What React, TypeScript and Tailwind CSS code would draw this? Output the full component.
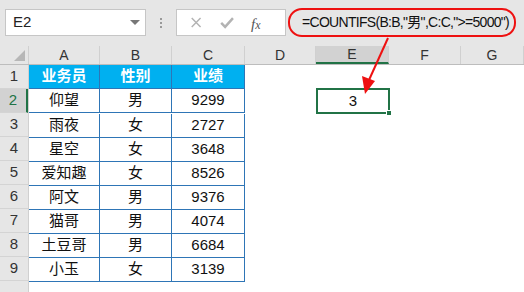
import React from "react";

const cols = ["A", "B", "C", "D", "E", "F", "G"];
const colWidths = [71, 72, 73, 71, 73, 72, 63];

const rows = [
  ["仰望", "男", "9299"],
  ["雨夜", "女", "2727"],
  ["星空", "女", "3648"],
  ["爱知趣", "女", "8526"],
  ["阿文", "男", "9376"],
  ["猫哥", "男", "4074"],
  ["土豆哥", "男", "6684"],
  ["小玉", "女", "3139"],
];

const font = { fontFamily: '"Liberation Sans", "Noto Sans CJK SC", sans-serif' };

function Cell({ text, w, head }: { text: string; w: number; head?: boolean }) {
  return (
    <div
      className={`h-[24px] flex items-center justify-center border-r border-b border-[#2e75b6] text-[15px] ${
        head ? "bg-[#00b0f0] text-white font-bold" : "bg-white text-[#111]"
      }`}
      style={{ width: w }}
    >
      {text}
    </div>
  );
}

export default function App() {
  return (
    <div className="relative w-[524px] h-[292px] overflow-hidden bg-white" style={font}>
      {/* formula bar */}
      <div className="h-[46px] bg-[#e6e6e6] flex items-start pt-[9px] pl-[5px]">
        <div className="w-[141px] h-[27px] bg-white border border-[#c6c6c6] flex items-center pl-[7px] pr-[5px] justify-between">
          <span className="text-[15px] text-[#222]">E2</span>
          <span className="w-0 h-0 border-l-[5px] border-r-[5px] border-t-[5px] border-l-transparent border-r-transparent border-t-[#777]" />
        </div>
        <div className="w-[30px] h-[27px] flex flex-col items-center justify-center gap-[2px]">
          <span className="w-[2px] h-[2px] bg-[#999]" />
          <span className="w-[2px] h-[2px] bg-[#999]" />
          <span className="w-[2px] h-[2px] bg-[#999]" />
        </div>
        <div className="w-[110px] h-[27px] bg-white border border-[#c6c6c6] flex items-center">
          <svg width="110" height="25" viewBox="0 0 110 25">
            <path d="M15 8 L24 17 M24 8 L15 17" stroke="#b3b3b3" strokeWidth="1.5" />
            <path d="M45 13 L49 17 L57 8" stroke="#b3b3b3" strokeWidth="2.5" fill="none" />
          </svg>
          <span
            className="absolute left-[251px] top-[13px] text-[15px] italic text-[#555]"
            style={{ fontFamily: '"Liberation Serif", serif' }}
          >
            f<span className="text-[12px]">x</span>
          </span>
        </div>
        <div className="flex-1 h-[29px] -mt-[1px] ml-[2px] flex items-center">
          <div className="h-[29px] w-[228px] border-2 border-[#ee1111] rounded-[14px] flex items-center pl-[12px] text-[14px] tracking-[-0.7px] text-[#111] whitespace-nowrap">
            =COUNTIFS(B:B,"男",C:C,"&gt;=5000")
          </div>
        </div>
      </div>

      {/* column headers */}
      <div className="flex h-[19px] bg-[#e6e6e6] border-b border-[#bdbdbd]">
        <div className="w-[29px] h-full border-r border-[#d0d0d0] relative">
          <span
            className="absolute right-[3px] bottom-[3px] w-0 h-0"
            style={{ borderBottom: "11px solid #b7b7b7", borderLeft: "11px solid transparent" }}
          />
        </div>
        {cols.map((c, i) => (
          <div
            key={c}
            className={`h-full flex items-center justify-center text-[14px] text-[#333] border-r border-[#d0d0d0] ${
              c === "E" ? "bg-[#d2d2d2] border-b-2 border-b-[#217346]" : ""
            }`}
            style={{ width: colWidths[i] }}
          >
            {c}
          </div>
        ))}
      </div>

      {/* sheet body */}
      <div className="flex">
        <div className="w-[29px] bg-[#e6e6e6] border-r border-[#d0d0d0] h-[227px]">
          {Array.from({ length: 9 }, (_, i) => (
            <div
              key={i}
              className={`h-[24px] flex items-end justify-center pb-[1px] text-[15px] text-[#333] border-b border-[#d4d4d4] ${
                i === 1 ? "bg-[#d2d2d2] border-r-2 border-r-[#217346] text-[#217346]" : ""
              }`}
            >
              {i + 1}
            </div>
          ))}
        </div>
        <div>
          <div className="flex">
            <Cell text="业务员" w={71} head />
            <Cell text="性别" w={72} head />
            <Cell text="业绩" w={73} head />
          </div>
          {rows.map((r, i) => (
            <div key={i} className="flex">
              <Cell text={r[0]} w={71} />
              <Cell text={r[1]} w={72} />
              <Cell text={r[2]} w={73} />
              {i === 0 && (
                <div className="ml-[71px] relative w-[74px] h-[26px] -mt-[1px] border-2 border-[#217346] flex items-center justify-center text-[15px] text-[#111]">
                  3
                  <span className="absolute -right-[4px] -bottom-[4px] w-[6px] h-[6px] bg-[#217346] border border-white" />
                </div>
              )}
            </div>
          ))}
        </div>
      </div>

      {/* annotation arrow */}
      <svg className="absolute left-0 top-0 pointer-events-none" width="524" height="292">
        <line x1="388" y1="38" x2="369" y2="80" stroke="#ee1111" strokeWidth="2" />
        <polygon points="365,94 362,76 375,81" fill="#ee1111" />
      </svg>
    </div>
  );
}
